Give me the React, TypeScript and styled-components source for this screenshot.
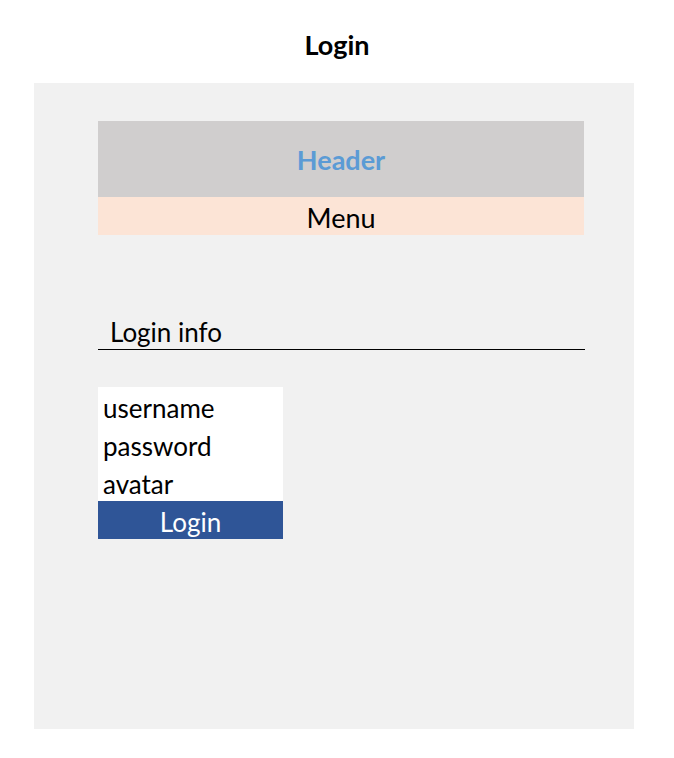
import React from "react";
import styled, { createGlobalStyle } from "styled-components";

const Global = createGlobalStyle`
  html, body { margin: 0; padding: 0; background: #ffffff; }
  body { font-family: Lato, "Open Sans", sans-serif; color: #000; }
`;

const Page = styled.div`
  width: 674px;
  height: 758px;
  display: flex;
  flex-direction: column;
`;

const Title = styled.h1`
  margin: 0;
  height: 83px;
  display: flex;
  align-items: center;
  justify-content: center;
  font-size: 27px;
  font-weight: 700;
  padding-top: 6px;
  box-sizing: border-box;
`;

const Panel = styled.main`
  margin-left: 34px;
  width: 600px;
  height: 646px;
  background: #f1f1f1;
  padding: 38px 49px 0 64px;
  box-sizing: border-box;
  display: flex;
  flex-direction: column;
`;

const Header = styled.header`
  height: 76px;
  background: #d0cece;
  color: #5b9bd5;
  font-weight: 700;
  font-size: 27px;
  display: flex;
  align-items: center;
  justify-content: center;
  padding-top: 1px;
  box-sizing: border-box;
  margin-right: 1px;
`;

const Menu = styled.nav`
  height: 38px;
  background: #fce4d6;
  font-size: 27px;
  display: flex;
  align-items: center;
  justify-content: center;
  padding-top: 2px;
  box-sizing: border-box;
  margin-right: 1px;
`;

const Section = styled.h2`
  margin: 82px 0 0;
  font-size: 26px;
  font-weight: 400;
  padding: 0 0 2px 12px;
  border-bottom: 1px solid #000;
  height: 30px;
  line-height: 30px;
`;

const Form = styled.form`
  margin-top: 37px;
  width: 185px;
  background: #ffffff;
  display: flex;
  flex-direction: column;
`;

const Field = styled.div`
  height: 38px;
  display: flex;
  align-items: center;
  padding: 3px 0 0 5px;
  box-sizing: border-box;
  font-size: 26px;
`;

const Button = styled.button`
  height: 38px;
  border: 0;
  background: #2f5597;
  color: #ffffff;
  font-family: inherit;
  font-size: 26px;
  padding: 3px 0 0;
  cursor: pointer;
`;

export default function App() {
  return (
    <Page>
      <Global />
      <Title>Login</Title>
      <Panel>
        <Header>Header</Header>
        <Menu>Menu</Menu>
        <Section>Login info</Section>
        <Form onSubmit={(e) => e.preventDefault()}>
          <Field>username</Field>
          <Field>password</Field>
          <Field>avatar</Field>
          <Button type="submit">Login</Button>
        </Form>
      </Panel>
    </Page>
  );
}
